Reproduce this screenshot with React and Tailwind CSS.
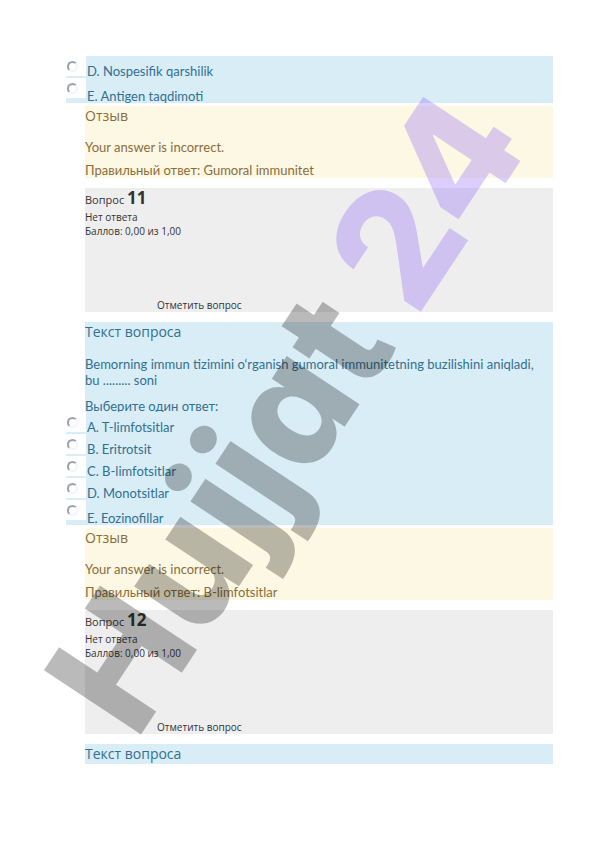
import React from 'react';

const questions = [
  {
    id: 10,
    options: ['D. Nospesifik qarshilik', 'E. Antigen taqdimoti'],
    answer: 'Gumoral immunitet',
  },
  {
    id: 11,
    text: 'Bemorning immun tizimini o‘rganish gumoral immunitetning buzilishini aniqladi, bu ......... soni',
    options: ['A. T-limfotsitlar', 'B. Eritrotsit', 'C. B-limfotsitlar', 'D. Monotsitlar', 'E. Eozinofillar'],
    answer: 'B-limfotsitlar',
  },
];

const Heading = ({ children }) => (
  <h2 className="font-['Open_Sans',sans-serif] text-[14px] leading-5">{children}</h2>
);

const Options = ({ id, options }) => (
  <div>
    {options.map((option, index) => (
      <label key={option} className="flex h-[22px] text-[#31708f] last:h-[25px]">
        <span className="w-5 shrink-0 bg-[#d9edf7]">
          <span className="flex h-5 items-center bg-white pl-px">
            <input
              type="radio"
              name={`question-${id}`}
              value={index}
              className="size-[11px] appearance-none rounded-full border-2 border-gray-100 border-t-gray-400 border-l-gray-400"
            />
          </span>
        </span>
        <span className="flex flex-1 items-end bg-[#d9edf7] pl-px leading-[14px]">{option}</span>
      </label>
    ))}
  </div>
);

const Feedback = ({ answer }) => (
  <div className="mt-[3px] ml-[19px] bg-[#fcf8e3] text-[#8a6d3b]">
    <Heading>Отзыв</Heading>
    <p className="mt-[13px]">Your answer is incorrect.</p>
    <p className="mt-[7px]">Правильный ответ: {answer}</p>
  </div>
);

const QuestionInfo = ({ number }) => (
  <div className="mt-2.5 ml-[19px] bg-[#eeeeee] pt-px font-['Open_Sans',sans-serif] text-[10px] leading-[14px] text-[#333333]">
    <h3 className="text-[11px] leading-5">
      Вопрос <span className="text-[17px] leading-none font-bold">{number}</span>
    </h3>
    <p>Нет ответа</p>
    <p>Баллов: 0,00 из 1,00</p>
    <p className="mt-[60px] pl-[72px]">Отметить вопрос</p>
  </div>
);

const Watermark = () => (
  <div
    aria-hidden="true"
    className="pointer-events-none absolute top-[604px] left-[136px] flex origin-[0_138px] -rotate-[56.5deg] gap-8 font-['Inter',sans-serif] text-[160px] leading-none font-extrabold whitespace-nowrap [font-feature-settings:'cv11']"
  >
    <span className="text-black/27">Hujjat</span>
    <span className="text-[#8b5cf6]/30">24</span>
  </div>
);

const App = () => {
  const [previous, current] = questions;

  return (
    <main className="relative min-h-screen overflow-hidden bg-white pt-14 pr-[43px] pb-[78px] pl-[66px] font-['Lato',sans-serif] text-[13px] leading-4">
      <Options id={previous.id} options={previous.options} />
      <Feedback answer={previous.answer} />

      <QuestionInfo number={11} />
      <div className="mt-2.5 ml-[19px] bg-[#d9edf7] text-[#31708f]">
        <Heading>Текст вопроса</Heading>
        <p className="mt-3.5 pr-2">{current.text}</p>
        <p className="pt-3 leading-3">Выберите один ответ:</p>
      </div>
      <Options id={current.id} options={current.options} />
      <Feedback answer={current.answer} />

      <QuestionInfo number={12} />
      <div className="mt-2.5 ml-[19px] bg-[#d9edf7] text-[#31708f]">
        <Heading>Текст вопроса</Heading>
      </div>
      <Watermark />
    </main>
  );
};

export default App;
